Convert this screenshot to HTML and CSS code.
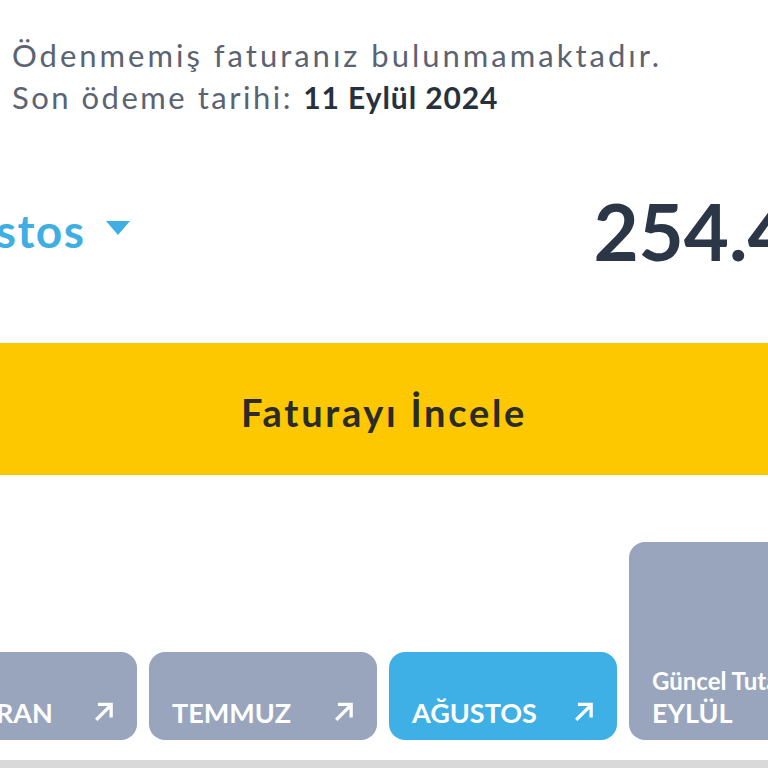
FILE: index.html
```html
<!DOCTYPE html>
<html lang="tr">
<head>
<meta charset="utf-8">
<link rel="stylesheet" href="styles.css">
</head>
<body>
<div class="page">
  <div class="info">
    <div class="line line-main">Ödenmemiş faturanız bulunmamaktadır.</div>
    <div class="line">Son ödeme tarihi: <strong class="date">11 Eylül 2024</strong></div>
  </div>
  <div class="period-row">
    <div class="period">Ağustos <span class="caret"></span></div>
    <div class="amount">254.41 TL</div>
  </div>
  <div class="cta">Faturayı İncele</div>
  <div class="cards">
    <div class="card">HAZİRAN <svg class="arrow" viewBox="0 0 20 20"><path d="M4 17 L16 5 M6 4 H16.5 V14.5" fill="none" stroke="#fff" stroke-width="3" stroke-linecap="square"/></svg></div>
    <div class="card">TEMMUZ <svg class="arrow" viewBox="0 0 20 20"><path d="M4 17 L16 5 M6 4 H16.5 V14.5" fill="none" stroke="#fff" stroke-width="3" stroke-linecap="square"/></svg></div>
    <div class="card active">AĞUSTOS <svg class="arrow" viewBox="0 0 20 20"><path d="M4 17 L16 5 M6 4 H16.5 V14.5" fill="none" stroke="#fff" stroke-width="3" stroke-linecap="square"/></svg></div>
    <div class="card tall">
      <div class="sub">Güncel Tutar</div>
      <div>EYLÜL</div>
    </div>
  </div>
  <div class="bottom-band"></div>
</div>
</body>
</html>
```
FILE: styles.css
```css
html, body {
  margin: 0;
  padding: 0;
  background: #fff;
}
.page {
  width: 768px;
  height: 768px;
  overflow: hidden;
  font-family: Lato, "Open Sans", sans-serif;
  display: flex;
  flex-direction: column;
}
.page > * {
  flex-shrink: 0;
}
.info {
  padding: 34px 12px 0;
  font-size: 31px;
  line-height: 42px;
  color: #5b6372;
  letter-spacing: 2.5px;
  white-space: nowrap;
}
.line-main {
  letter-spacing: 3px;
}
.date {
  color: #27303d;
  font-weight: 700;
  font-size: 30px;
  letter-spacing: 0.9px;
}
.period-row {
  display: flex;
  align-items: center;
  margin-top: 73px;
  margin-left: -91px;
  margin-right: -174px;
  height: 80px;
}
.period {
  font-size: 46px;
  font-weight: 700;
  color: #3eaee3;
  letter-spacing: 1.5px;
  display: flex;
  align-items: center;
  gap: 21px;
  line-height: 1;
}
.caret {
  width: 0;
  height: 0;
  margin-top: -6px;
  border-left: 12px solid transparent;
  border-right: 12px solid transparent;
  border-top: 14px solid #3eaee3;
}
.amount {
  margin-left: auto;
  font-size: 78px;
  font-weight: 700;
  color: #2b3746;
  line-height: 1;
  white-space: nowrap;
}
.cta {
  margin-top: 72px;
  height: 132px;
  box-sizing: border-box;
  padding-top: 6px;
  background: #fdc800;
  display: flex;
  align-items: center;
  justify-content: center;
  font-size: 38px;
  font-weight: 700;
  letter-spacing: 2.7px;
  color: #2b2b2b;
}
.cards {
  display: flex;
  align-items: flex-end;
  gap: 12px;
  margin-top: 67px;
  margin-left: -91px;
}
.card {
  flex: 0 0 228px;
  height: 88px;
  box-sizing: border-box;
  border-radius: 16px;
  background: #98a5bd;
  color: #fff;
  font-size: 27px;
  font-weight: 700;
  display: flex;
  align-items: flex-end;
  justify-content: space-between;
  padding: 0 22px 14px 23px;
  line-height: 1;
}
.card.active {
  background: #3eb0e6;
}
.arrow {
  width: 22px;
  height: 22px;
  margin-bottom: 4px;
}
.card.tall {
  height: 198px;
  flex-direction: column;
  align-items: flex-start;
  justify-content: flex-end;
  gap: 6px;
}
.sub {
  font-size: 24px;
  font-weight: 700;
  white-space: nowrap;
}
.bottom-band {
  margin-top: 20px;
  height: 10px;
  background: #d9d9d9;
}
```
